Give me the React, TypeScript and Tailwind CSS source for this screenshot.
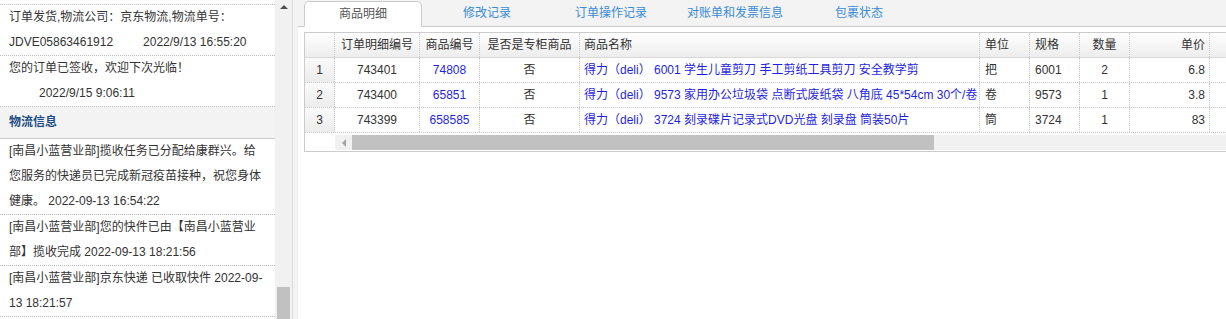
const cols = [
  { w: "w-[30px]", align: "justify-center" },
  { w: "w-[85px]", align: "justify-center" },
  { w: "w-[60px]", align: "justify-center" },
  { w: "w-[100px]", align: "justify-center" },
  { w: "w-[400px]", align: "justify-start pl-[4px]" },
  { w: "w-[50px]", align: "justify-start pl-[5px]" },
  { w: "w-[50px]", align: "justify-start pl-[5px]" },
  { w: "w-[50px]", align: "justify-center" },
  { w: "w-[80px]", align: "justify-end pr-[4px]" },
  { w: "w-[60px]", align: "justify-center" },
]

const headers = ["", "订单明细编号", "商品编号", "是否是专柜商品", "商品名称", "单位", "规格", "数量", "单价", ""]

const rows = [
  ["1", "743401", "74808", "否", "得力（deli） 6001 学生儿童剪刀 手工剪纸工具剪刀 安全教学剪", "把", "6001", "2", "6.8", ""],
  ["2", "743400", "65851", "否", "得力（deli） 9573 家用办公垃圾袋 点断式废纸袋 八角底 45*54cm 30个/卷", "卷", "9573", "1", "3.8", ""],
  ["3", "743399", "658585", "否", "得力（deli） 3724 刻录碟片记录式DVD光盘 刻录盘 筒装50片", "筒", "3724", "1", "83", ""],
]

const tabs = ["商品明细", "修改记录", "订单操作记录", "对账单和发票信息", "包裹状态"]

const logistics = [
  "[南昌小蓝营业部]揽收任务已分配给康群兴。给您服务的快递员已完成新冠疫苗接种，祝您身体健康。 2022-09-13 16:54:22",
  "[南昌小蓝营业部]您的快件已由【南昌小蓝营业部】揽收完成 2022-09-13 18:21:56",
  "[南昌小蓝营业部]京东快递 已收取快件 2022-09-13 18:21:57",
]

function Cell({ i, children, className = "" }: { i: number; children?: React.ReactNode; className?: string }) {
  const c = cols[i]
  return (
    <div
      className={`${c.w} ${c.align} shrink-0 flex items-center overflow-hidden whitespace-nowrap border-r border-dotted border-[#c8c8c8] ${className}`}
    >
      {children}
    </div>
  )
}

export default function App() {
  return (
    <div className="flex w-[1226px] h-[319px] overflow-hidden bg-white text-[12px] text-[#333] [text-spacing-trim:space-all] font-['Liberation_Sans','Noto_Sans_CJK_SC',sans-serif]">
      {/* left: order log */}
      <div className="flex w-[292px] shrink-0 h-full overflow-hidden">
        <div className="w-[275px] shrink-0 leading-[25px]">
          <div className="h-[5px] border-b border-dotted border-[#bbb]" />
          <div className="px-[9px] border-b border-dotted border-[#bbb]">
            <div className="whitespace-nowrap">订单发货,物流公司：京东物流,物流单号：</div>
            <div className="whitespace-nowrap">
              JDVE05863461912<span className="ml-[30px]">2022/9/13 16:55:20</span>
            </div>
          </div>
          <div className="px-[9px] border-b border-dotted border-[#bbb]">
            <div>您的订单已签收，欢迎下次光临！</div>
            <div className="pl-[30px]">2022/9/15 9:06:11</div>
          </div>
          <div className="h-[32px] px-[9px] flex items-center bg-[#f3f3f3] border-b border-[#ccc] font-bold text-[#1d4c84]">
            物流信息
          </div>
          {logistics.map((t) => (
            <div key={t} className="px-[9px] border-b border-dotted border-[#bbb]">
              {t}
            </div>
          ))}
        </div>
        {/* vertical scrollbar */}
        <div className="w-[17px] shrink-0 h-full bg-[#f1f1f1] flex flex-col items-center justify-between">
          <div className="mt-[5px] w-0 h-0 border-x-[4px] border-b-[4px] border-x-transparent border-b-[#505050]" />
          <div className="w-[13px] h-[32px] bg-[#c1c1c1]" />
        </div>
      </div>

      {/* splitter */}
      <div className="w-[6px] shrink-0 h-full bg-[#f3f3f3] border-l border-[#dcdcdc]" />

      {/* right: tabs + table */}
      <div className="flex-1 min-w-0 flex flex-col">
        <div className="h-[27px] shrink-0 flex items-end gap-[6px] pl-[6px] bg-[#f3f3f3] border-b border-[#ccc]">
          {tabs.map((t, i) =>
            i === 0 ? (
              <div
                key={t}
                className="w-[118px] h-[26px] -mb-[1px] flex items-center justify-center bg-white border border-[#ccc] border-b-white rounded-t-[5px] text-[#555]"
              >
                {t}
              </div>
            ) : (
              <div key={t} className="w-[118px] h-[26px] flex items-center justify-center text-[#3a8bd6]">
                {t}
              </div>
            )
          )}
        </div>

        <div className="mt-[5px] ml-[6px] border border-r-0 border-[#ccc] overflow-hidden">
          <div className="flex h-[25px] border-b border-[#d8d8d8] bg-linear-to-b from-white to-[#ededed]">
            {headers.map((h, i) => (
              <Cell key={i} i={i}>
                {h}
              </Cell>
            ))}
            <div className="flex-1" />
          </div>
          {rows.map((r) => (
            <div key={r[0]} className="flex h-[25px] border-b border-dotted border-[#c8c8c8]">
              {r.map((v, i) => (
                <Cell
                  key={i}
                  i={i}
                  className={
                    i === 0
                      ? "bg-linear-to-b from-[#fafafa] to-[#ececec]"
                      : i === 2 || i === 4
                        ? "text-[#1f1fe0]"
                        : ""
                  }
                >
                  {v}
                </Cell>
              ))}
              <div className="flex-1" />
            </div>
          ))}
          {/* horizontal scrollbar */}
          <div className="flex h-[18px] pt-[2px]">
            <div className="w-[30px] shrink-0" />
            <div className="flex-1 h-[15px] flex bg-[#f1f1f1]">
              <div className="w-[17px] shrink-0 flex items-center justify-center">
                <div className="w-0 h-0 border-y-[4px] border-r-[4px] border-y-transparent border-r-[#a3a3a3]" />
              </div>
              <div className="w-[582px] h-full bg-[#c1c1c1]" />
            </div>
          </div>
        </div>
      </div>
    </div>
  )
}
